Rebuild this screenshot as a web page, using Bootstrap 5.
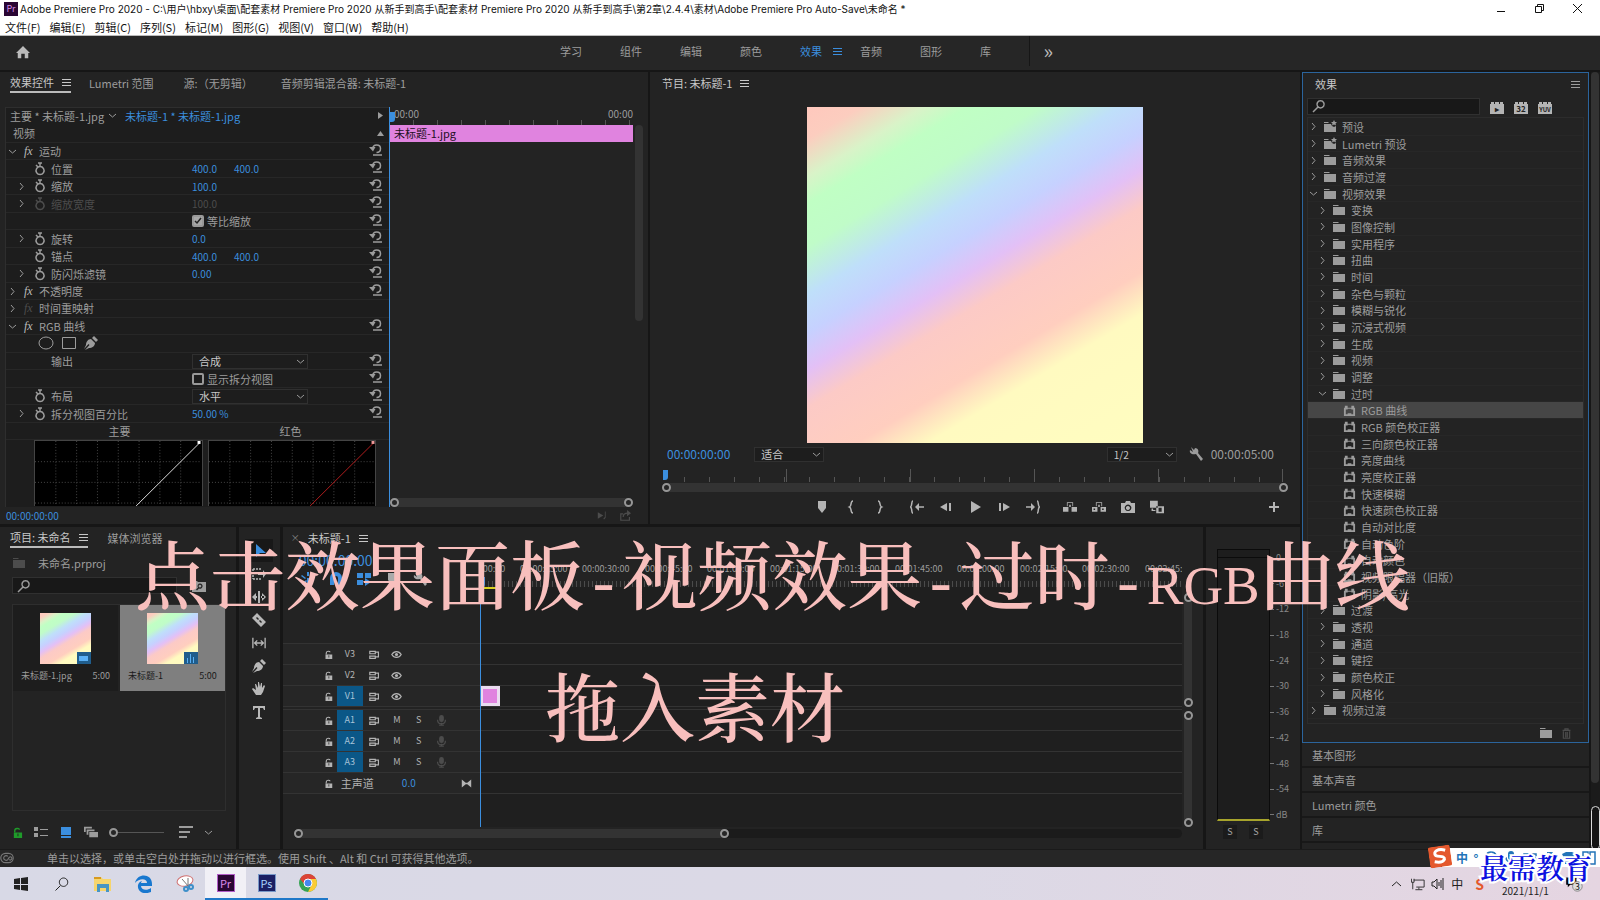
<!DOCTYPE html>
<html lang="zh-CN">
<head>
<meta charset="utf-8">
<meta name="viewport" content="width=device-width, initial-scale=1">
<title>Adobe Premiere Pro 2020</title>
<link rel="stylesheet" href="https://cdn.jsdelivr.net/npm/bootstrap@5.3.0/dist/css/bootstrap.min.css">
<style>
:root{--bg:#232323;--deep:#1d1d1d;--line:#2e2e2e;--seam:#161616;--txt:#9c9c9c;--hi:#c8c8c8;--blue:#3b8ede}
body{height:100vh;overflow:hidden;background:var(--seam);color:var(--txt);font:11px/16px "Noto Sans CJK SC",sans-serif}
button,select,input{font:inherit;color:inherit}
button{background:none;border:0;padding:0;white-space:nowrap}
.i{width:14px;height:14px;flex:none;display:block;fill:currentColor}
.i.s{width:9px;height:9px}
.i.m{width:11px;height:11px}
.ln{fill:none;stroke:currentColor;stroke-width:1.5}
.blue{color:var(--blue)}
.fill{min-height:0;min-width:0}
.white-zone{background:#fff;color:#111}
.titlebar{height:18px;white-space:nowrap}
.title-text{font:10px/16px Inter,"Noto Sans CJK SC",sans-serif}
.menubar{height:18px;gap:9px;padding-left:5px;border-bottom:1px solid #bbb}
.pr-logo{width:14px;height:14px;background:#2a0634;color:#d48be8;font-size:9px;line-height:14px;text-align:center;margin-right:2px}
.workbar{height:34px;padding-bottom:4px;background:#262626}
.workbar nav{flex:1 1 0;gap:38px;padding-left:10px}
.ws-left{width:550px;flex:none}
.ws-on{gap:11px;margin-right:-20px}
.ws-more{border-left:1px solid #161616;width:24px;font-size:20px;line-height:20px;color:#bbb}
.app-main{padding-top:2px;gap:2px}
.left-zone{flex:1300 1 0;gap:3px}
.upper{flex:452 1 0;gap:2px}.lower{flex:322 1 0;gap:3px}
.pane{background:var(--bg)}
.pane-tabs{height:22px;flex:none;align-items:center}
.pane-tabs .on{color:var(--hi);border-bottom:2px solid #bbb;line-height:18px}
/* effect controls */
.ec{flex:648 1 0}.pgm{flex:650 1 0}
.ec-body{margin:13px 5px 0 5px}
.ec-props{width:384px;flex:none;background:var(--deep);border-left:1px solid var(--line)}
.ec-src{height:18px;flex:none;border-top:1px solid var(--line);padding-bottom:2px}
.ec-rows{flex:none;height:315px}
.prop{flex:1 1 0;min-height:0;position:relative;display:grid;grid-template-columns:45px 141px 1fr 20px;align-items:center;border-bottom:1px solid #272727;line-height:16px}
.prop.top-level{grid-template-columns:33px 153px 1fr 20px}
.prop button{padding-bottom:3px}
.prop .lead-icons{display:flex;align-items:center;justify-content:flex-end;gap:7px;padding-right:4px}
.prop.top-level .lead-icons{justify-content:space-between;padding-left:2px;padding-right:9px}
.num{font-size:10px}
.num+.num{margin-left:17px}
.off{color:#4c4c4c}
.fx{font:italic 12px/12px "Liberation Serif",serif;color:#bbb}
.fx.off{color:#4c4c4c}
.prop select,.pgm select{appearance:none;border:1px solid #303030;background:#1d1d1d;color:var(--hi);height:15px;line-height:13px;padding:0 6px}
.prop select{width:116px}
.pgm select{width:70px}
.sel{position:relative;display:inline-block;line-height:0}
.sel svg{position:absolute;right:3px;top:3px;pointer-events:none}
.tick{appearance:none;width:12px;height:12px;border:2px solid #999;border-radius:2px;margin:0 3px 0 0;display:block}
.tick:checked{background:#a8a8a8 url("data:image/svg+xml,%3Csvg xmlns='http://www.w3.org/2000/svg' viewBox='0 0 8 8'%3E%3Cpath d='M1 4l2 2 4-5' fill='none' stroke='%23222' stroke-width='1.5'/%3E%3C/svg%3E")}
.curves{padding:0 13px 0 28px;gap:5px;overflow:hidden}
.curves svg{flex:1 1 0;min-width:0;height:66px;background:#000;border:1px solid #444;border-bottom:0}
.ec-time{border-left:1px solid var(--blue);position:relative}
.ruler-s{height:18px;flex:none;font-size:10px;line-height:14px;background:repeating-linear-gradient(90deg,transparent 0 23px,#555 23px 24px) 0 100%/100% 5px no-repeat}
.clipbar{height:17px;flex:none;background:#e083df;color:#221022;padding-left:4px;line-height:17px}
.head{position:absolute;width:5px;height:10px;background:var(--blue);border-radius:0 0 3px 0}
.vbar{width:8px;background:#333;border-radius:4px}
.ec-scroll{height:196px;margin:18px 0 0 2px}
.hbar{height:9px;background:#333;border-radius:5px;display:flex;justify-content:space-between;align-items:center}
.ring{width:9px;height:9px;border:2px solid #969696;border-radius:50%;display:block;flex:none;background:#262626}
.ec-foot{height:17px;flex:none;padding:0 17px 0 6px}
/* program monitor */
.pic{background:linear-gradient(149deg,#ffc8bd 0%,#fccdbf 6%,#d9f3c8 13%,#c0ffc4 18%,#c0fcc8 26%,#bfdffa 35%,#c6d1ff 42%,#e3c0f6 49%,#fccac6 56%,#ffcebf 68%,#fffac0 76%,#fffdc0 100%)}
.monitor{flex:none;height:336px;aspect-ratio:1;margin-top:13px}
.pgm-ctl{height:22px;flex:none;padding:0 26px 0 17px}
.tc{font-size:12px}
.pgm-ruler{height:13px;margin:4px 16px 0 13px;flex:none;position:relative;background:repeating-linear-gradient(90deg,transparent 0 24px,#555 24px 25px) -3px 100%/100% 5px no-repeat,repeating-linear-gradient(90deg,transparent 0 123px,#555 123px 124px)}
.pgm .hbar{margin:1px 12px 0}
.transport button{width:29px;display:flex;justify-content:center}
.transport{height:30px;flex:none;color:#b4b4b4}
/* project */
.proj{flex:236 1 0}
.find{background:#181818;border:1px solid #303030;height:17px;min-width:0;padding:0 4px;gap:4px}
.find input{background:none;border:0;outline:0;padding:0;min-width:0;width:100%;height:14px}
.bin{border:1px solid var(--line);margin:10px 10px 0 12px}
.bin-row{gap:2px}
.asset{flex:1 1 0;height:86px;padding:8px 8px 0;background:var(--deep);font-size:9px}
.asset.picked{background:#7f7f7f;color:#1a1a1a}
.thumb{width:51px;height:51px;position:relative}
.thumb span{position:absolute;right:0;bottom:0;width:14px;height:12px;background:#205d8c;color:#5ab0f5;display:flex;align-items:center;justify-content:center}
.proj-foot{height:38px;flex:none;padding:4px 16px 0 12px;gap:11px}
.tools{width:41px;flex:none;color:#b8b8b8;padding-top:12px}
.tools button{width:28px;height:23px;display:flex;align-items:center;justify-content:center}
.tools .on{background:#181818;color:var(--blue)}
/* timeline */
.tl{flex:921 1 0}
.tl-heads{width:197px;flex:none}
.tl-top{height:94px;flex:none}
.trk{height:21px;flex:none;border-top:1px solid #333}
.tl-heads .trk{display:grid;grid-template-columns:38px 16px 26px 24px 20px 24px 22px 1fr;align-items:center;justify-items:center;background:#262626;font-size:9px;color:#b4b4b4}
.trk b{width:26px;height:20px;line-height:20px;text-align:center;font-weight:400}
.trk b.src{background:#0b5787;color:#a8c4d8}
.gap3{height:3px;flex:none;border-top:1px solid #333}
.lanes{background:#1f1f1f;position:relative;overflow:hidden}
.marks{position:relative;height:38px;background:repeating-linear-gradient(90deg,#4b4b4b 0 1px,transparent 1px 4px) 0 100%/100% 6px no-repeat,var(--bg);overflow:hidden}
.marks span{position:absolute;top:12px;font-size:9px;line-height:16px;transform:translateX(-50%)}
.lanes .tl-top{background:linear-gradient(var(--bg) 38px,#1f1f1f 38px)}
.work-area{width:20px;height:2px;background:#d8d020}
.clip{width:20px;height:20px;background:#e083df;border:3px solid #eadcf0}
.cti{position:absolute;left:0;top:38px;bottom:0;border-left:1px solid var(--blue);width:1px}
.tl-bars{width:21px;flex:none;padding:44px 0 0 2px}
.tl-bars .vbar{display:flex;flex-direction:column;justify-content:space-between;align-items:center}
.tl-foot{height:22px;flex:none;padding:2px 21px 0 11px}
/* meters */
.meter{width:94px;flex:none;padding:22px 0 0 11px}
.vu{width:53px;flex:none;border:1px solid #0b0b0b;background:linear-gradient(#0b0b0b,#0b0b0b) 0 7px/100% 1px no-repeat,#1d1d1d;border-bottom:2px solid #a7a42c}
.scale{font-size:9px;line-height:12px;padding:3px 0 0 0;color:#888;flex:none;width:26px}
.scale div{padding-left:6px;background:linear-gradient(#777,#777) 0 50%/4px 1px no-repeat}
.solo{width:14px;height:14px;background:#1b1b1b;font-size:9px;line-height:14px;color:#aaa}
/* effects browser */
.right-zone{flex:287 1 0}
.fxp{border:1px solid #2b649c;flex:none;height:671px}
.fxp .find{flex:0 0 173px}
.fx-list{border:1px solid #2c2c2c;margin:0 4px;flex:none;height:607px;padding:1px 0 4px}
.fx-list li{flex:1 1 0;min-height:0;display:flex;align-items:center;border-bottom:1px solid #272727;line-height:16px;padding-left:1px}
.fx-list .lv1{padding-left:10px}.fx-list .lv2{padding-left:35px}
.fx-list .lv2 .i{width:13px;height:13px}
.fx-list .cur{background:#464646}
.fx-list .i{margin-right:5px}
.shut{height:25px;flex:none;border-bottom:2px solid #181818;padding-left:10px;text-align:left;line-height:22px;background:var(--bg)}
.edge{width:9px;flex:none;background:#1b1b1b}
.edge .vbar{height:711px;flex:none}
.edge .pill{height:44px;border:1px solid #ddd;border-radius:5px;margin-top:23px;background:#161616}
.status{height:18px;flex:none;background:#262626;gap:33px;border-top:1px solid #1a1a1a;padding-bottom:2px}
.taskbar{height:33px;flex:none;background:linear-gradient(90deg,#d8d9e6,#dcd9e6 60%,#e5d5e1);color:#222}
.taskbar .app{width:41px;height:33px;display:flex;align-items:center;justify-content:center}
.taskbar .run{border-bottom:2px solid #1f78c8}
.taskbar .now{background:#f1f0f6}
.taskbar .app .i{width:18px;height:18px}
.taskbar .app .i.g{width:14px;height:14px}
.sq{width:18px;height:18px;font-size:11px;line-height:16px;text-align:center}
.tray{gap:6px}
.tray .sogou{color:#e4572b;font-size:14px;margin:0 12px 0 6px}
.tray .date{width:50px;padding-top:14px;font-size:10px}
.tray .note{width:22px;height:16px;margin:0 14px 0 6px}
/* layers above the workspace */
.cap{position:absolute;color:#f8bfbd;font:500 75px/90px "Noto Serif CJK SC","Noto Sans CJK SC",serif;white-space:nowrap;z-index:5;pointer-events:none;margin:0}
.cap-a{left:135px;top:527px}.cap-b{left:545px;top:659px}
.cap i{font:62px "Liberation Mono",monospace}
.cap em{font:55px "Liberation Serif",serif}
.ime{position:absolute;right:0;bottom:33px;height:19px;width:158px;background:#fff;color:#2374b8;z-index:6;padding:0 4px 0 14px;font-size:12px;font-weight:700}
.ime .flag{position:absolute;left:-13px;top:-2px;width:22px;height:21px;transform:rotate(-8deg)}
.brand{position:absolute;right:8px;bottom:16px;z-index:7;font:600 28px/34px "Noto Serif CJK SC","Noto Sans CJK SC",serif;color:#0b10e0;-webkit-text-stroke:4px #fff;paint-order:stroke fill}
</style>
</head>
<body class="d-flex flex-column position-relative">
<svg width="0" height="0" class="position-absolute" aria-hidden="true"><defs>
<symbol id="home" viewBox="0 0 16 16"><path d="M8 1L0 9h2v6h4v-5h4v5h4V9h2z"/></symbol>
<symbol id="menu" viewBox="0 0 9 9"><path d="M0 1h9v1H0zM0 4h9v1H0zM0 7h9v1H0z"/></symbol>
<symbol id="right" viewBox="0 0 9 9"><path fill="none" stroke="currentColor" d="M3 1l3 3.500L3 8"/></symbol>
<symbol id="down" viewBox="0 0 9 9"><path fill="none" stroke="currentColor" d="M1 3l3.500 3L8 3"/></symbol>
<symbol id="watch" viewBox="0 0 14 14"><path class="ln" d="M7 4.500a4 4 0 1 0 .1 0zM5 1h4M7 1v3M3 3l1.500 1.500"/></symbol>
<symbol id="reset" viewBox="0 0 14 14"><path class="ln" d="M3.500 6C4 .5 11.500 1 11.500 5.500 11.500 8 10 9.500 7.500 9.500M4 12h9"/><path d="M0 4h6.500L4 8.500z"/></symbol>
<symbol id="lens" viewBox="0 0 14 14"><path class="ln" d="M8.500 1.800a3.600 3.600 0 1 0 .1 0zM6 8l-5 5"/></symbol>
<symbol id="pen" viewBox="0 0 14 14"><path d="M10 0l4 4-2 2-4-4zM7 3l4 4c0 3-3 5-6 5l-4 2 4.500-5-1-1L0 13 2 9c0-3 2-6 5-6z"/></symbol>
<symbol id="folder" viewBox="0 0 14 14"><path d="M1 2h5l1 1H1zM1 4h12v8H1z"/></symbol>
<symbol id="findbin" viewBox="0 0 14 14"><path fill-rule="evenodd" d="M0 2h5l1 1h8v10H0zm8 2.500a2.500 2.500 0 0 0-2 4L4 10.500l1 1 2-2a2.600 2.600 0 1 0 1-5zm0 1.200a1.400 1.400 0 1 1-.1 0z"/></symbol>
<symbol id="preset" viewBox="0 0 14 14"><path d="M1 2h4l1 1H1zM1 4h7l1 2 2 1 2-1v6H1z"/><path d="M11 0l1 2h2l-1.500 1.500.5 2-2-1-2 1 .5-2L8 2h2z"/></symbol>
<symbol id="plug" viewBox="0 0 14 14"><path fill-rule="evenodd" d="M2 4V2h3v2h4V2h3v2h1v9H1V4zm1 2v5h2v-1h4v1h2V6H9V5H5v1z"/></symbol>
<symbol id="brick" viewBox="0 0 16 14"><path d="M2 3V1h3v2h1V1h4v2h1V1h3v2h1v10H1V3z"/></symbol>
<symbol id="trash" viewBox="0 0 14 14"><path class="ln" d="M2 3h10M5 3V1h4v2M3 4v9h8V4M6 5v7M8 5v7"/></symbol>
<symbol id="tomark" viewBox="0 0 14 14"><path d="M3 1h8v7l-4 5-4-5z"/></symbol>
<symbol id="bl" viewBox="0 0 14 14"><path class="ln" d="M9 1C6 1 8 6 5.500 7 8 8 6 13 9 13"/></symbol>
<symbol id="br" viewBox="0 0 14 14"><path class="ln" d="M5 1c3 0 1 5 3.500 6C6 8 8 13 5 13"/></symbol>
<symbol id="goin" viewBox="0 0 14 14"><path class="ln" d="M3 1C1 1 2.500 6 .5 7 2.500 8 1 13 3 13M7 7h7"/><path d="M5 7l4-4v8z"/></symbol>
<symbol id="goout" viewBox="0 0 14 14"><path class="ln" d="M11 1c2 0 .5 5 2.500 6-2 1-.5 6-2.500 6M0 7h7"/><path d="M9 7L5 3v8z"/></symbol>
<symbol id="stepb" viewBox="0 0 14 14"><path d="M1 7l7-4v8zM10 3h2v8h-2z"/></symbol>
<symbol id="play" viewBox="0 0 14 14"><path d="M3 1l10 6-10 6z"/></symbol>
<symbol id="stepf" viewBox="0 0 14 14"><path d="M13 7L6 3v8zM2 3h2v8H2z"/></symbol>
<symbol id="lift" viewBox="0 0 18 14"><path d="M0 7h7v6H0zM11 7h7v6h-7zM5 1h8v5h-1V2H6v4H5zM8 4h2v3H8z"/></symbol>
<symbol id="extract" viewBox="0 0 18 14"><path fill-rule="evenodd" d="M0 7h7v6H0zm2 2v2h2V9zM11 7h7v6h-7zm2 2v2h2V9zM5 1h8v5h-1V2H6v4H5zM8 4h2v3H8z"/></symbol>
<symbol id="cam" viewBox="0 0 14 14"><path fill-rule="evenodd" d="M4 3l1-2h4l1 2h4v10H0V3zm3 1.500a3.300 3.300 0 1 0 .1 0zM7 6a2 2 0 1 1-.1 0z"/></symbol>
<symbol id="compare" viewBox="0 0 18 16"><path fill-rule="evenodd" d="M0 0h10v9H0zM8 7h10v9H8zm3 2v5h4V9zM2 10h2v2h3v1H2z"/></symbol>
<symbol id="plus" viewBox="0 0 14 14"><path d="M6 2h2v4h4v2H8v4H6V8H2V6h4z"/></symbol>
<symbol id="wrench" viewBox="0 0 14 14"><path d="M2 0l3 3 1-2c3 0 4 3 3 5l5 6-2 2-5-7C3 8 0 6 1 3l3 2z"/></symbol>
<symbol id="lock" viewBox="0 0 10 12"><path fill-rule="evenodd" d="M1 6h9v6H1zm4 1v3h1V7z"/><path class="ln" d="M2 6V4c0-3 5-3 5-1"/></symbol>
<symbol id="sync" viewBox="0 0 14 12"><path class="ln" d="M1 2h7v3H1zM1 8h7v3H1zM8 3h4v6H8"/></symbol>
<symbol id="eye" viewBox="0 0 14 12"><path class="ln" d="M1 6c3-5 9-5 12 0-3 5-9 5-12 0z"/><circle cx="7" cy="6" r="2"/></symbol>
<symbol id="mic" viewBox="0 0 14 14"><rect x="4" y="0" width="6" height="9" rx="3"/><path class="ln" d="M2 6c0 7 10 7 10 0M7 10v3M4 13h6"/></symbol>
<symbol id="arrow" viewBox="0 0 14 14"><path d="M4 0v13l4-4h6z"/></symbol>
<symbol id="track" viewBox="0 0 14 14"><path d="M6 6h5V3l3 4-3 4V8H6z"/><path class="ln" stroke-dasharray="2 1" d="M1 2h9M1 12h9M1 2v10"/></symbol>
<symbol id="ripple" viewBox="0 0 14 14"><path d="M6 1h2v12H6zM0 7l4-4v8zM14 7l-4-4v8zM2 6h3v2H2zM9 6h3v2H9z"/></symbol>
<symbol id="razor" viewBox="0 0 14 14"><path fill-rule="evenodd" d="M5 0l9 9-5 5-9-9zM4 5l2 2 1-1-2-2zM7 8l2 2 1-1-2-2z"/></symbol>
<symbol id="slip" viewBox="0 0 16 14"><path class="ln" d="M1 1v12M15 1v12M4 7h8M6 4L3 7l3 3M10 4l3 3-3 3"/></symbol>
<symbol id="hand" viewBox="0 0 14 14"><path d="M4 13L0 7l1-1 3 2-1-6h1l2 4V0h1l1 5 1-4h1v5l2-3 1 1-2 6-2 3z"/></symbol>
<symbol id="type" viewBox="0 0 14 14"><path d="M1 1h12v4h-1l-1-2H8v9l2 1v1H4v-1l2-1V3H3L2 5H1z"/></symbol>
<symbol id="list" viewBox="0 0 14 12"><path d="M0 1h4v4H0zM0 7h4v4H0zM6 3h8v1H6zM6 9h8v1H6z"/></symbol>
<symbol id="tile" viewBox="0 0 14 14"><path d="M2 2h10v8H2zM2 11h10v2H2z"/></symbol>
<symbol id="stack" viewBox="0 0 16 12"><path d="M0 0h9v2H2v4H0zM3 3h9v2H5v4H3zM6 6h10v6H6z"/></symbol>
<symbol id="sort" viewBox="0 0 14 12"><path d="M0 0h14v2H0zM0 5h11v2H0zM0 10h8v2H0z"/></symbol>
<symbol id="magnet" viewBox="0 0 14 14"><path d="M1 13V6a6 6 0 0 1 12 0v7h-4V6a2 2 0 0 0-4 0v7z"/></symbol>
<symbol id="nest" viewBox="0 0 14 14"><path d="M6 0h2v4H6zM1 3l4 3-1 1-4-3zM13 3L9 6l1 1 4-3zM6 6h2v8H6zM1 12l4-4 1 1-4 4z"/></symbol>
<symbol id="link" viewBox="0 0 14 14"><path d="M0 1h6v5H0zM8 1h6v5H8zM0 8h6v5H0zM8 6l6 4-6 4z"/></symbol>
<symbol id="bow" viewBox="0 0 14 12"><path d="M1 1l5 4h2l5-4v10L8 7H6l-5 4z"/></symbol>
<symbol id="share" viewBox="0 0 14 14"><path class="ln" d="M4 5H1v8h11V9M4 9c0-4 2-5 6-5"/><path d="M9 0l5 4-5 4z"/></symbol>
<symbol id="cc" viewBox="0 0 18 14"><rect class="ln" x="1" y="1" width="16" height="12" rx="6"/><path class="ln" d="M10 5a3 3 0 1 0 0 4l2-3a2 2 0 1 1 0 3"/></symbol>
</defs></svg>

<header class="white-zone flex-shrink-0">
  <div class="titlebar d-flex align-items-center ps-1">
    <span class="pr-logo">Pr</span>
    <span class="title-text flex-grow-1">Adobe Premiere Pro 2020 - C:\用户\hbxy\桌面\配套素材 Premiere Pro 2020 从新手到高手\配套素材 Premiere Pro 2020 从新手到高手\第2章\2.4.4\素材\Adobe Premiere Pro Auto-Save\未命名 *</span>
    <div class="d-flex gap-4 me-3">
      <button aria-label="最小化"><svg class="i"><path fill="none" stroke="currentColor" d="M3 9.500h8"/></svg></button>
      <button aria-label="还原"><svg class="i" viewBox="0 0 14 14"><path fill="none" stroke="currentColor" d="M3.500 4.500h6v6h-6zM5.500 4V2.500h6v6H10"/></svg></button>
      <button aria-label="关闭"><svg class="i" viewBox="0 0 14 14"><path fill="none" stroke="currentColor" d="M3 2l9 9M12 2l-9 9"/></svg></button>
    </div>
  </div>
  <nav class="menubar d-flex align-items-center"><button>文件(F)</button><button>编辑(E)</button><button>剪辑(C)</button><button>序列(S)</button><button>标记(M)</button><button>图形(G)</button><button>视图(V)</button><button>窗口(W)</button><button>帮助(H)</button></nav>
</header>

<div class="workbar d-flex align-items-center flex-shrink-0">
  <div class="ws-left ps-3"><button class="mt-1" aria-label="主页"><svg class="i" style="color:#bbb"><use href="#home"/></svg></button></div>
  <nav class="d-flex align-items-center h-100">
    <button>学习</button><button>组件</button><button>编辑</button><button>颜色</button>
    <span class="ws-on d-flex align-items-center blue"><button>效果</button><svg class="i s"><use href="#menu"/></svg></span>
    <button>音频</button><button>图形</button><button>库</button>
    <button class="ws-more h-100 text-end" aria-label="更多">»</button>
  </nav>
</div>

<main class="app-main d-flex flex-grow-1 fill">
 <div class="left-zone d-flex flex-column fill">
  <div class="upper d-flex fill">
   <section class="ec pane d-flex flex-column fill">
    <nav class="pane-tabs d-flex"><button class="on d-flex align-items-center gap-2" style="margin-left:10px">效果控件 <svg class="i s"><use href="#menu"/></svg></button><button style="margin-left:18px">Lumetri 范围</button><button style="margin-left:30px">源:（无剪辑）</button><button style="margin-left:28px">音频剪辑混合器: 未标题-1</button></nav>
    <div class="ec-body d-flex flex-grow-1 fill">
     <div class="ec-props d-flex flex-column fill">
      <div class="ec-src d-flex align-items-center ps-1"><span>主要 * 未标题-1.jpg</span><svg class="i s mx-1"><use href="#down"/></svg><a href="#" class="blue text-decoration-none flex-grow-1 ms-1">未标题-1 * 未标题-1.jpg</a><svg class="i s me-1" viewBox="0 0 9 9"><path d="M2 1l5 3.500L2 8z"/></svg></div>
      <div class="ec-rows d-flex flex-column" id="props"></div>
      <div class="curves d-flex flex-grow-1">
       <svg viewBox="0 0 168 66" preserveAspectRatio="none"><path d="M21 0v66M42 0v66M63 0v66M84 0v66M105 0v66M126 0v66M147 0v66M0 21h168M0 42h168M0 63h168" stroke="#484848" stroke-dasharray="1 2"/><path d="M102 66L166 2" stroke="#ddd"/><path d="M164 0h3v3h-3z" fill="#fff"/></svg>
       <svg viewBox="0 0 168 66" preserveAspectRatio="none"><path d="M21 0v66M42 0v66M63 0v66M84 0v66M105 0v66M126 0v66M147 0v66M0 21h168M0 42h168M0 63h168" stroke="#484848" stroke-dasharray="1 2"/><path d="M102 66L166 2" stroke="#b11d1d"/><path d="M164 0h3v3h-3z" fill="#e99"/></svg>
      </div>
     </div>
     <div class="ec-time d-flex flex-column flex-grow-1 fill">
      <div class="head" style="left:0;top:5px"></div>
      <div class="d-flex flex-grow-1">
       <div class="flex-grow-1"><div class="ruler-s d-flex justify-content-between"><span class="ps-1">00:00</span><span>00:00</span></div><div class="clipbar">未标题-1.jpg</div></div>
       <div class="vbar ec-scroll"></div>
      </div>
      <div class="hbar" style="margin-right:10px"><span class="ring"></span><span class="ring"></span></div>
     </div>
    </div>
    <div class="ec-foot d-flex align-items-center"><span class="blue num flex-grow-1">00:00:00:00</span><svg class="i m me-2 off" viewBox="0 0 14 14"><path d="M1 3l7 4-7 4zM10 2h1v8l-2 2-1-1 2-2z"/></svg><svg class="i m off ms-1"><use href="#share"/></svg></div>
   </section>

   <section class="pgm pane d-flex flex-column fill">
    <div class="pane-tabs d-flex gap-2" style="padding-left:12px;color:#c8c8c8"><span>节目: 未标题-1</span><svg class="i s"><use href="#menu"/></svg></div>
    <div class="monitor pic align-self-center"></div>
    <div class="pgm-ctl d-flex align-items-center"><span class="tc blue">00:00:00:00</span>
     <span class="sel ms-4"><select aria-label="缩放级别"><option>适合</option></select><svg class="i s"><use href="#down"/></svg></span>
     <span class="sel ms-auto"><select aria-label="回放分辨率" class="num"><option>1/2</option></select><svg class="i s"><use href="#down"/></svg></span>
     <button class="mx-2" aria-label="设置"><svg class="i ms-1"><use href="#wrench"/></svg></button><span class="tc">00:00:05:00</span></div>
    <div class="pgm-ruler"><div class="head" style="left:0;top:1px"></div></div>
    <div class="hbar"><span class="ring"></span><span class="ring"></span></div>
    <div class="transport d-flex align-items-center">
     <div style="flex:162 1 0"></div>
     <div class="d-flex gap-2" id="transport"></div>
     <div style="flex:124 1 0" class="d-flex justify-content-end pe-2"><button class="me-1" aria-label="按钮编辑器"><svg class="i"><use href="#plus"/></svg></button></div>
    </div>
   </section>
  </div>

  <div class="lower d-flex fill">
   <section class="proj pane d-flex flex-column fill">
    <nav class="pane-tabs d-flex"><button class="on d-flex align-items-center gap-2" style="margin-left:10px">项目: 未命名 <svg class="i s"><use href="#menu"/></svg></button><button style="margin-left:20px">媒体浏览器</button></nav>
    <div class="d-flex align-items-center gap-2" style="height:28px;padding-left:12px"><svg class="i off"><use href="#folder"/></svg><span class="ms-1">未命名.prproj</span></div>
    <div class="d-flex align-items-center" style="padding-left:12px"><div class="find d-flex align-items-center" style="flex:0 0 165px"><svg class="i"><use href="#lens"/></svg><input aria-label="搜索项目"></div><button style="margin-left:15px" aria-label="从查询创建新的搜索素材箱"><svg class="i"><use href="#findbin"/></svg></button></div>
    <div class="bin flex-grow-1 fill"><div class="bin-row d-flex">
      <div class="asset"><div class="thumb pic mx-auto"><span><svg class="i s"><path d="M0 2h9v5H0z"/></svg></span></div><div class="d-flex justify-content-between mt-1"><span>未标题-1.jpg</span><span>5:00</span></div></div>
      <div class="asset picked"><div class="thumb pic mx-auto"><span><svg class="i s" viewBox="0 0 9 9"><path d="M4 0h1v9H4zM1 4h1v5H1zM7 3h1v6H7z"/></svg></span></div><div class="d-flex justify-content-between mt-1"><span>未标题-1</span><span>5:00</span></div></div>
    </div></div>
    <div class="proj-foot d-flex align-items-center"><svg class="i m" style="color:#1f9b2a"><use href="#lock"/></svg><svg class="i"><use href="#list"/></svg><svg class="i blue"><use href="#tile"/></svg><svg class="i"><use href="#stack"/></svg><span class="d-flex align-items-center"><span class="ring"></span><span style="width:46px;height:1px;background:#555"></span></span><svg class="i ms-1"><use href="#sort"/></svg><svg class="i s"><use href="#down"/></svg></div>
   </section>
   <section class="tools pane d-flex flex-column align-items-center" id="tools"></section>

   <section class="tl pane d-flex flex-column fill">
    <div class="pane-tabs d-flex gap-2 ps-2" style="color:#c8c8c8"><button aria-label="关闭序列" style="font-size:9px;color:#888">×</button><span>未标题-1</span><svg class="i s"><use href="#menu"/></svg></div>
    <div class="d-flex flex-grow-1 fill">
     <div class="tl-heads d-flex flex-column" id="heads">
      <div class="tl-top ps-3"><div class="blue" style="font-size:14px;line-height:23px">00:00:00:00</div><div class="d-flex blue" style="gap:14px;padding-left:2px"><svg class="i"><use href="#nest"/></svg><svg class="i"><use href="#magnet"/></svg><svg class="i"><use href="#link"/></svg><svg class="i" style="color:#aaa"><use href="#tomark"/></svg><svg class="i" style="color:#aaa"><use href="#wrench"/></svg></div></div>
     </div>
     <div class="lanes flex-grow-1 d-flex flex-column fill" id="lanes">
      <div class="tl-top"><div class="marks" id="marks"></div><div class="work-area"></div></div>
      <div class="trk"></div><div class="trk"></div><div class="trk"><div class="clip"></div></div><div class="gap3"></div>
      <div class="trk"></div><div class="trk"></div><div class="trk"></div><div class="trk"></div><div class="trk"></div>
      <div class="cti"></div><div class="head" style="left:0;top:28px"></div>
     </div>
     <div class="tl-bars d-flex flex-column gap-1"><div class="vbar" style="flex:112 1 0"><span class="ring"></span><span class="ring"></span></div><div class="vbar" style="flex:114 1 0"><span class="ring"></span><span class="ring"></span></div></div>
    </div>
    <div class="tl-foot"><div style="background:#1b1b1b;border-radius:5px"><div class="hbar" style="width:49%"><span class="ring"></span><span class="ring"></span></div></div></div>
   </section>

   <section class="meter pane d-flex flex-column">
    <div class="d-flex flex-grow-1 fill"><div class="vu"></div><div class="scale d-flex flex-column justify-content-between" id="scale"></div></div>
    <div class="d-flex gap-2" style="height:28px;padding:4px 0 0 6px"><button class="solo me-1">S</button><button class="solo">S</button></div>
   </section>
  </div>
 </div>

 <aside class="right-zone d-flex flex-column fill">
  <section class="fxp pane d-flex flex-column">
   <div class="pane-tabs d-flex justify-content-between px-2"><span class="ps-1" style="color:#c8c8c8">效果</span><button aria-label="面板菜单"><svg class="i s"><use href="#menu"/></svg></button></div>
   <div class="d-flex align-items-center ps-1" style="height:22px"><div class="find d-flex align-items-center"><svg class="i"><use href="#lens"/></svg><input aria-label="搜索效果"></div>
    <span class="d-flex gap-2" style="margin-left:9px" id="badges"></span></div>
   <ul class="fx-list list-unstyled d-flex flex-column" id="tree"></ul>
   <div class="d-flex flex-grow-1 align-items-center justify-content-end gap-1 pe-3"><svg class="i me-1"><use href="#folder"/></svg><svg class="i m off"><use href="#trash"/></svg></div>
  </section>
  <button class="shut">基本图形</button><button class="shut">基本声音</button><button class="shut">Lumetri 颜色</button><button class="shut">库</button><div class="pane flex-grow-1"></div>
 </aside>
 <div class="edge"><div class="vbar"></div><div class="pill"></div></div>
</main>

<footer class="status d-flex align-items-center"><svg class="i" style="color:#777"><use href="#cc"/></svg><span>单击以选择，或单击空白处并拖动以进行框选。使用 Shift 、Alt 和 Ctrl 可获得其他选项。</span></footer>

<div class="taskbar d-flex align-items-center">
 <button class="app" aria-label="开始"><svg class="i g" viewBox="0 0 14 14"><path d="M0 2l6-1v6H0zM7 1l7-1v7H7zM0 8h6v5l-6-1zM7 8h7v6l-7-1z"/></svg></button>
 <button class="app" aria-label="搜索"><svg class="i g" viewBox="0 0 14 14"><path fill="none" stroke="currentColor" d="M8.500 1a4.200 4.200 0 1 0 .1 0zM5.500 8.500l-5 5"/></svg></button>
 <button class="app" aria-label="文件资源管理器"><svg class="i" viewBox="0 0 18 18"><path d="M0 2h7l2 2h8v12H0z" fill="#f6d56d"/><path d="M0 2h7v2H0z" fill="#d79a20"/><path d="M3 9h12v8h-3v-4H6v4H3z" fill="#4795c4"/></svg></button>
 <button class="app" aria-label="Edge"><svg class="i" viewBox="0 0 18 18"><path d="M0 8C2-2 17-2 17 9v2H6c0 4 6 5 10 2v4C9 20 2 17 3 10c1-3 3-4 4-4-1 1-1 2-1 2h6c0-5-8-5-12 0z" fill="#1978cf"/></svg></button>
 <button class="app" aria-label="截图工具"><svg class="i" viewBox="0 0 18 18"><ellipse cx="9" cy="6" rx="8" ry="5" fill="#fff" stroke="#cf7070" transform="rotate(-12 9 6)"/><path d="M6 4l7 8M12 3v9" stroke="#777"/><circle cx="10" cy="14" r="2" fill="none" stroke="#3d8fc9" stroke-width="2"/><circle cx="15" cy="12" r="2" fill="none" stroke="#3d8fc9" stroke-width="2"/></svg></button>
 <button class="app run now"><span class="sq" style="background:#2a0634;color:#d88bea;border:1px solid #b25dc8">Pr</span></button>
 <button class="app run"><span class="sq" style="background:#1b1f63;color:#a9d2ff;border:1px solid #7898c8">Ps</span></button>
 <button class="app run" aria-label="Chrome"><svg class="i" viewBox="0 0 18 18"><circle cx="9" cy="9" r="9" fill="#35a352"/><path d="M17 5a9 9 0 0 1-8 13l4-8-2-5z" fill="#fbcb35"/><path d="M1 5a9 9 0 0 1 16 0H9z" fill="#dc4437"/><path d="M1 5l5 6 3-6z" fill="#dc4437"/><circle cx="9" cy="9" r="4" fill="#4587ee" stroke="#fff"/></svg></button>
 <div class="tray ms-auto d-flex align-items-center">
  <svg class="i s me-1" viewBox="0 0 9 9"><path fill="none" stroke="currentColor" d="M0 7l4.500-4L9 7"/></svg>
  <svg class="i" viewBox="0 0 16 14"><path fill="none" stroke="currentColor" d="M3 2.500h12v8H6M9 11v2M5 13.500h8M.5 1v4h3V1M2 5v8"/></svg>
  <svg class="i" viewBox="0 0 14 14"><path fill="none" stroke="currentColor" d="M1 5h2l3-3v10L3 9H1zM8 5v4M10 3v8M12 1v12"/></svg>
  <span style="font-size:12px">中</span>
  <span class="sogou fw-bold">S</span>
  <span class="date align-self-end">2021/11/1</span>
  <svg class="note" viewBox="0 0 22 20"><path d="M0 2h13v9H5l-3 3v-3H0z"/><circle cx="14" cy="13" r="6" fill="#ddd" stroke="#777"/><text x="11" y="17" font-size="11" fill="#111">3</text></svg>
 </div>
</div>

<p class="cap cap-a">点击效果面板<i>-</i>视频效果<i>-</i>过时<i>-</i><em class="fst-normal">RGB</em>曲线</p>
<p class="cap cap-b">拖入素材</p>
<div class="ime d-flex align-items-center justify-content-between"><svg class="flag" viewBox="0 0 22 21"><rect width="22" height="21" rx="2" fill="#e4582d"/><path d="M17 5C10 2 4 5 7 9c3 2 9 1 8 5-2 3-7 2-10 1" fill="none" stroke="#fff" stroke-width="3"/></svg><span>中</span><span>°</span><svg class="i" viewBox="0 0 14 14"><path class="ln" d="M7 1a6 6 0 1 0 .1 0M4 8c1 3 5 3 6 0M5 4v2M9 4v2"/></svg><svg class="i"><use href="#mic"/></svg><svg class="i" viewBox="0 0 14 14"><path class="ln" d="M1 3h12v8H1zM3 6h8M4 9h6"/></svg><svg class="i" viewBox="0 0 14 14"><path d="M4 1h6v5H4zM1 13c0-8 12-8 12 0z"/></svg><svg class="i" viewBox="0 0 14 14"><path d="M0 3l4-2h6l4 2-2 4h-1v6H3V7H2z"/></svg><svg class="i" viewBox="0 0 14 14"><path class="ln" d="M1 1h5v5H1zM8 1h5v12H1V8h7z"/></svg></div>
<div class="brand">最需教育</div>

<script>
const ico=(n,c='')=>`<svg class="i ${c}"><use href="#${n}"/></svg>`;
const nums=v=>v.map(t=>`<span class="num blue">${t}</span>`).join('');
const pick=(l,t)=>`<span class="sel"><select aria-label="${l}"><option>${t}</option></select>${ico('down','s')}</span>`;
const tick=(t,on)=>`<label class="d-flex align-items-center"><input type="checkbox" class="tick" ${on?'checked':''}>${t}</label>`;
const rows=[
 {top:1,name:'视频',head:1},{top:1,open:1,fx:1,name:'运动'},
 {w:1,name:'位置',v:nums(['400.0','400.0'])},{a:1,w:1,name:'缩放',v:nums(['100.0'])},
 {a:1,w:1,off:1,name:'缩放宽度',v:'<span class="num off">100.0</span>'},{name:'',v:tick('等比缩放',1)},
 {a:1,w:1,name:'旋转',v:nums(['0.0'])},{w:1,name:'锚点',v:nums(['400.0','400.0'])},
 {a:1,w:1,name:'防闪烁滤镜',v:nums(['0.00'])},{top:1,fx:1,name:'不透明度'},
 {top:1,fx:1,dim:1,nor:1,name:'时间重映射'},{top:1,open:1,fx:1,name:'RGB 曲线'},
 {mask:1},{name:'输出',v:pick('输出','合成')},{name:'',v:tick('显示拆分视图',0)},
 {w:1,name:'布局',v:pick('布局','水平')},{a:1,w:1,name:'拆分视图百分比',v:nums(['50.00 %'])},{titles:1}];
document.getElementById('props').innerHTML=rows.map(r=>{
 if(r.mask)return `<div class="prop" style="display:flex;gap:8px;padding-left:32px"><svg class="i" style="width:16px" viewBox="0 0 16 14"><ellipse fill="none" stroke="currentColor" cx="8" cy="7" rx="7" ry="6"/></svg><svg class="i" viewBox="0 0 14 14"><path fill="none" stroke="currentColor" d="M.5 1.500h13v11H.5z"/></svg>${ico('pen')}</div>`;
 if(r.titles)return `<div class="prop" style="display:flex;padding:0 13px 0 28px;text-align:center"><span class="flex-fill">主要</span><span class="flex-fill">红色</span></div>`;
 if(r.head)return `<div class="prop" style="display:flex;justify-content:space-between;padding:0 4px 0 7px"><span>${r.name}</span><svg class="i s" viewBox="0 0 9 9"><path d="M1 7l3.500-5L8 7z"/></svg></div>`;
 const icons=r.top?ico(r.open?'down':'right','s')+`<span class="fx ${r.dim?'off':''}">fx</span>`:(r.a?ico('right','s'):'')+(r.w?ico('watch',r.off?'off':''):'');
 return `<div class="prop ${r.top?'top-level':''}"><span class="lead-icons">${icons}</span><span class="${r.off?'off':''}">${r.name}</span><span>${r.v||''}</span>${r.nor?'':`<button aria-label="重置">${ico('reset')}</button>`}</div>`}).join('');
document.getElementById('transport').innerHTML=[['tomark','bl','br'],['goin','stepb','play','stepf','goout'],['lift','extract','cam','compare']].map(g=>`<div class="d-flex">${g.map(n=>`<button aria-label="${n}">${ico(n)}</button>`).join('')}</div>`).join('');
document.getElementById('tools').innerHTML=['arrow','track','ripple','razor','slip','pen','hand','type'].map((n,k)=>`<button class="${k?'':'on'}" aria-label="${n}">${ico(n)}</button>`).join('');
const head=(n,src,aud)=>`<div class="trk"><span></span>${ico('lock','s')}<b class="${src?'src':''}">${n}</b>${ico('sync','m')}${aud?'<span>M</span><span>S</span>'+ico('mic','off m'):ico('eye','m')}</div>`;
document.getElementById('heads').insertAdjacentHTML('beforeend',head('V3')+head('V2')+head('V1',1)+'<div class="gap3"></div>'+head('A1',1,1)+head('A2',1,1)+head('A3',1,1)+`<div class="trk"><span></span>${ico('lock','s')}<span class="ps-1" style="grid-column:3/5;font-size:11px;justify-self:start">主声道</span><span class="blue num" style="grid-column:5/7">0.0</span><span></span><span class="ms-auto me-2">${ico('bow','m')}</span></div><div class="trk" style="background:none"></div>`);
const names=[':00:00','00:00:15:00','00:00:30:00','00:00:45:00','00:01:00:00','00:01:15:00','00:01:30:00','00:01:45:00','00:02:00:00','00:02:15:00','00:02:30:00','00:02:45:00'];
document.getElementById('marks').innerHTML=names.map((t,k)=>`<span style="left:${k?Math.round(k*62.5)+1:13}px">${t}</span>`).join('');
document.getElementById('scale').innerHTML=['0','-6','-12','-18','-24','-30','-36','-42','-48','-54','dB'].map(t=>`<div>${t}</div>`).join('');
document.getElementById('badges').innerHTML=['▸','32','YUV'].map(t=>`<button aria-label="${t}"><svg width="16" height="14" viewBox="0 0 16 14" fill="#b4b4b4"><use href="#brick"/><text x="8" y="11" text-anchor="middle" font-size="${t=='YUV'?6:8}" font-weight="700" fill="#222">${t}</text></svg></button>`).join('');
const tree=[[0,'预设','preset'],[0,'Lumetri 预设','preset'],[0,'音频效果'],[0,'音频过渡'],[0,'视频效果','',1],
 ...['变换','图像控制','实用程序','扭曲','时间','杂色与颗粒','模糊与锐化','沉浸式视频','生成','视频','调整'].map(t=>[1,t]),[1,'过时','',1],
 ...['RGB 曲线','RGB 颜色校正器','三向颜色校正器','亮度曲线','亮度校正器','快速模糊','快速颜色校正器','自动对比度','自动色阶','自动颜色','视频限幅器（旧版）','阴影/高光'].map(t=>[2,t,'plug']),
 ...['过渡','透视','通道','键控','颜色校正','风格化'].map(t=>[1,t]),[0,'视频过渡']];
document.getElementById('tree').innerHTML=tree.map(([l,t,ic,o])=>`<li class="lv${l} ${t=='RGB 曲线'?'cur':''}">${l<2?ico(o?'down':'right','s'):''}${ico(ic||'folder')}${t}</li>`).join('');
</script>
<script src="https://cdn.jsdelivr.net/npm/bootstrap@5.3.0/dist/js/bootstrap.bundle.min.js"></script>
</body>
</html>
